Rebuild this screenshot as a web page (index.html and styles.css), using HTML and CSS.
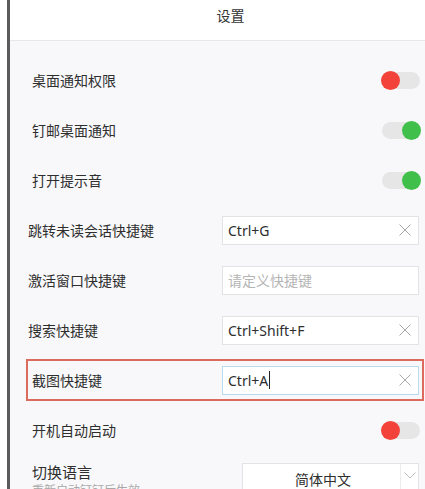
FILE: index.html
```html
<!DOCTYPE html>
<html lang="zh-CN">
<head>
    <meta charset="UTF-8">
    <meta name="viewport" content="width=device-width, initial-scale=1.0">
    <title>设置</title>
    <link rel="stylesheet" href="styles.css">
</head>
<body>
    <div class="edge"></div>
    <div class="panel">
        <div class="header">设置</div>
        <div class="content">
            <!-- 开关 -->
            <div class="row">
                <span class="label">桌面通知权限</span>
                <div class="switch off"><span class="knob"></span></div>
            </div>
            <div class="row">
                <span class="label">钉邮桌面通知</span>
                <div class="switch on"><span class="knob"></span></div>
            </div>
            <div class="row">
                <span class="label">打开提示音</span>
                <div class="switch on"><span class="knob"></span></div>
            </div>
            <!-- 快捷键 -->
            <div class="row row-key">
                <span class="label">跳转未读会话快捷键</span>
                <div class="key-input">
                    <span class="key-value">Ctrl+G</span>
                    <svg class="clear" width="12" height="12" viewBox="0 0 12 12"><path d="M0.5 0.5L11.5 11.5M11.5 0.5L0.5 11.5" stroke="#a8a8a8" stroke-width="1" fill="none"/></svg>
                </div>
            </div>
            <div class="row row-key">
                <span class="label">激活窗口快捷键</span>
                <div class="key-input">
                    <span class="key-value placeholder">请定义快捷键</span>
                </div>
            </div>
            <div class="row row-key">
                <span class="label">搜索快捷键</span>
                <div class="key-input">
                    <span class="key-value">Ctrl+Shift+F</span>
                    <svg class="clear" width="12" height="12" viewBox="0 0 12 12"><path d="M0.5 0.5L11.5 11.5M11.5 0.5L0.5 11.5" stroke="#a8a8a8" stroke-width="1" fill="none"/></svg>
                </div>
            </div>
            <div class="row marked">
                <span class="label">截图快捷键</span>
                <div class="key-input focus">
                    <span class="key-value">Ctrl+A<span class="caret"></span></span>
                    <svg class="clear" width="12" height="12" viewBox="0 0 12 12"><path d="M0.5 0.5L11.5 11.5M11.5 0.5L0.5 11.5" stroke="#a8a8a8" stroke-width="1" fill="none"/></svg>
                </div>
            </div>
            <div class="row">
                <span class="label">开机自动启动</span>
                <div class="switch off"><span class="knob"></span></div>
            </div>
            <!-- 语言 -->
            <div class="row row-lang">
                <div class="lang-text">
                    <div class="label big">切换语言</div>
                    <div class="hint">重新启动钉钉后生效</div>
                </div>
                <div class="select">
                    <span class="select-value">简体中文</span>
                    <span class="select-arrow">
                        <svg width="12" height="7" viewBox="0 0 12 7"><path d="M0.5 0.5L6 6L11.5 0.5" stroke="#bdbdbd" stroke-width="1" fill="none"/></svg>
                    </span>
                </div>
            </div>
        </div>
    </div>
</body>
</html>
```

FILE: styles.css
```css
body {
    margin: 0;
    width: 425px;
    height: 489px;
    overflow: hidden;
    display: flex;
    background-color: #ffffff;
    font-family: "Noto Sans", "Noto Sans CJK SC", sans-serif;
    color: #333333;
}
.edge {
    width: 3px;
    margin-left: 7px;
    background-color: #5b5b5b;
    flex-shrink: 0;
}
.panel {
    flex: 1;
    min-width: 0;
}
.header {
    height: 40px;
    line-height: 32px;
    padding-left: 26px;
    text-align: center;
    font-size: 14px;
    color: #333333;
    background-color: #ffffff;
    border-bottom: 1px solid #e8e8ea;
}
.content {
    background-color: #f8f8fa;
    padding-top: 14px;
    height: 434px;
    overflow: hidden;
}
.row {
    position: relative;
    display: flex;
    align-items: center;
    justify-content: space-between;
    height: 50px;
    padding: 0 5px 0 22px;
}
.row-key {
    padding-left: 18px;
}
.label {
    font-size: 14px;
    font-family: "Noto Sans CJK SC", sans-serif;
    color: #2e2e2e;
}
.label.big {
    font-size: 15px;
}
.marked::after {
    content: "";
    position: absolute;
    top: 4px;
    bottom: 4px;
    left: 16px;
    right: 1px;
    border: 2px solid #dc6b5e;
}

/* 开关 */
.switch {
    width: 38px;
    height: 17px;
    border-radius: 9px;
    background-color: #e6e6e6;
    display: flex;
    align-items: center;
}
.switch.on {
    justify-content: flex-end;
}
.knob {
    width: 19px;
    height: 19px;
    border-radius: 50%;
    margin: 0 -1px;
}
.switch.off .knob {
    background-color: #f3423a;
}
.switch.on .knob {
    background-color: #41bf4b;
}

/* 快捷键输入框 */
.key-input {
    box-sizing: border-box;
    width: 197px;
    height: 29px;
    margin-right: 1px;
    padding: 0 7px 0 5px;
    display: flex;
    align-items: center;
    justify-content: space-between;
    background-color: #ffffff;
    border: 1px solid #e3e3e5;
}
.key-input.focus {
    border-color: #b9d9ee;
}
.key-value {
    font-size: 14px;
    color: #2e2e2e;
    display: flex;
    align-items: center;
}
.key-value.placeholder {
    font-family: "Noto Sans CJK SC", sans-serif;
    color: #b5b5b5;
}
.caret {
    width: 1px;
    height: 18px;
    margin-left: 1px;
    background-color: #222222;
}

/* 语言 */
.row-lang {
    align-items: flex-start;
    padding-top: 7px;
    height: auto;
}
.lang-text {
    line-height: 20px;
}
.hint {
    margin-top: 0;
    line-height: 16px;
    font-size: 12px;
    color: #a8a8a8;
    font-family: "Noto Sans CJK SC", sans-serif;
}
.select {
    box-sizing: border-box;
    width: 177px;
    height: 32px;
    margin-top: 1px;
    margin-right: 1px;
    display: flex;
    align-items: center;
    background-color: #ffffff;
    border: 1px solid #e3e3e5;
}
.select-value {
    flex: 1;
    text-align: center;
    font-size: 14px;
    font-family: "Noto Sans CJK SC", sans-serif;
    color: #2e2e2e;
    padding-left: 3px;
}
.select-arrow {
    width: 18px;
    height: 30px;
    border-left: 1px solid #ececec;
    display: flex;
    justify-content: center;
    padding-top: 8px;
    box-sizing: border-box;
}
```
